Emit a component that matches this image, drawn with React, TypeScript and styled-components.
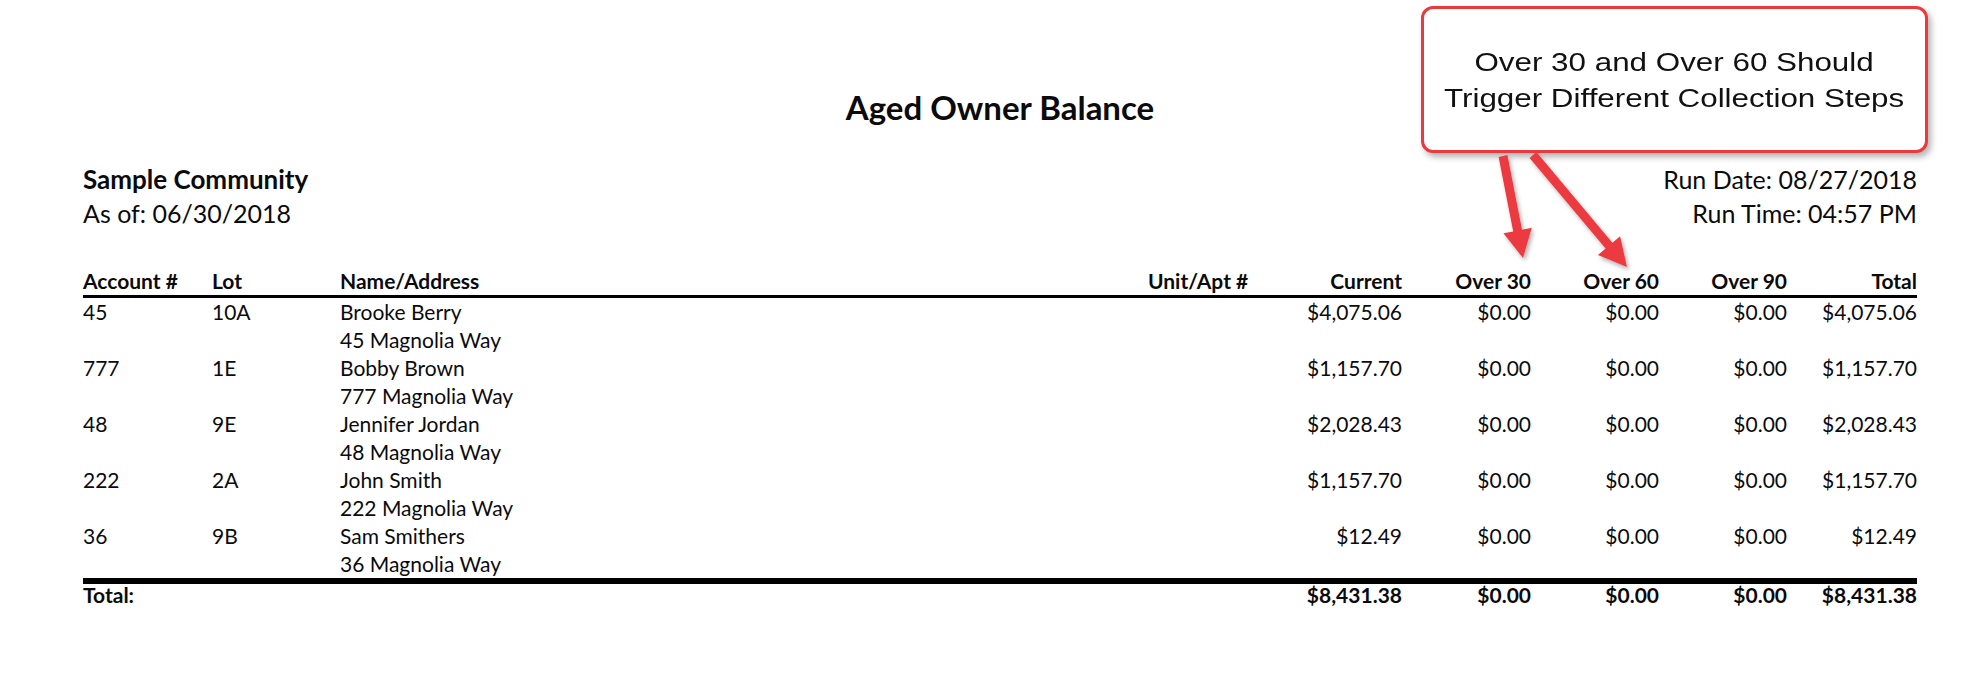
import React from "react";
import styled, { createGlobalStyle } from "styled-components";

const GlobalStyle = createGlobalStyle`
  html, body {
    margin: 0;
    padding: 0;
    background: #ffffff;
  }
  * { box-sizing: border-box; }
`;

const COLS = "129px 128px 808px 127px 127px 129px 128px 128px 130px";

const Page = styled.div`
  position: relative;
  width: 1985px;
  height: 700px;
  padding: 91px 68px 0 83px;
  font-family: "Lato", "Open Sans", sans-serif;
  font-size: 21px;
  color: #0b0b0e;
  background: #fff;
  overflow: hidden;
`;

const Title = styled.h1`
  margin: 0;
  text-align: center;
  font-size: 33px;
  line-height: 32px;
  font-weight: 700;
`;

const InfoRow = styled.div`
  display: flex;
  justify-content: space-between;
  margin-top: 39px;
  font-size: 25px;
  line-height: 34px;
`;

const InfoBlock = styled.div<{ $right?: boolean }>`
  display: flex;
  flex-direction: column;
  align-items: ${(p) => (p.$right ? "flex-end" : "flex-start")};
`;

const Community = styled.div`
  font-weight: 700;
  font-size: 26px;
`;

const GridRow = styled.div`
  display: grid;
  grid-template-columns: ${COLS};
`;

const HeaderRow = styled(GridRow)`
  margin-top: 37px;
  font-weight: 700;
  line-height: 28px;
  border-bottom: 3px solid #000;
`;

const Record = styled(GridRow)`
  line-height: 28px;
`;

const TotalRow = styled(GridRow)`
  font-weight: 700;
  line-height: 22px;
  border-top: 6px solid #000;
`;

const Cell = styled.div<{ $right?: boolean }>`
  text-align: ${(p) => (p.$right ? "right" : "left")};
  white-space: nowrap;
`;

const Callout = styled.div`
  position: absolute;
  left: 1421px;
  top: 6px;
  width: 507px;
  height: 147px;
  border: 3px solid #ea3a3e;
  border-radius: 12px;
  background: #fff;
  box-shadow: 3px 4px 6px rgba(0, 0, 0, 0.3);
  display: flex;
  align-items: center;
  justify-content: center;
`;

const CalloutText = styled.div`
  font-family: "Liberation Sans", Arial, sans-serif;
  font-size: 25.5px;
  line-height: 36px;
  color: #111111;
  text-align: center;
  white-space: nowrap;
  transform: scaleX(1.23);
`;

const ArrowLayer = styled.svg`
  position: absolute;
  left: 1470px;
  top: 140px;
  overflow: visible;
`;

type Row = {
  acct: string;
  lot: string;
  name: string;
  addr: string;
  current: string;
  o30: string;
  o60: string;
  o90: string;
  total: string;
};

const rows: Row[] = [
  { acct: "45", lot: "10A", name: "Brooke Berry", addr: "45 Magnolia Way", current: "$4,075.06", o30: "$0.00", o60: "$0.00", o90: "$0.00", total: "$4,075.06" },
  { acct: "777", lot: "1E", name: "Bobby Brown", addr: "777 Magnolia Way", current: "$1,157.70", o30: "$0.00", o60: "$0.00", o90: "$0.00", total: "$1,157.70" },
  { acct: "48", lot: "9E", name: "Jennifer Jordan", addr: "48 Magnolia Way", current: "$2,028.43", o30: "$0.00", o60: "$0.00", o90: "$0.00", total: "$2,028.43" },
  { acct: "222", lot: "2A", name: "John Smith", addr: "222 Magnolia Way", current: "$1,157.70", o30: "$0.00", o60: "$0.00", o90: "$0.00", total: "$1,157.70" },
  { acct: "36", lot: "9B", name: "Sam Smithers", addr: "36 Magnolia Way", current: "$12.49", o30: "$0.00", o60: "$0.00", o90: "$0.00", total: "$12.49" },
];

function arrowPoints(
  tx: number, ty: number, hx: number, hy: number,
  shaft = 9, headW = 29, headL = 28
): string {
  const dx = hx - tx;
  const dy = hy - ty;
  const len = Math.hypot(dx, dy);
  const ux = dx / len;
  const uy = dy / len;
  const px = -uy;
  const py = ux;
  const bx = hx - ux * headL;
  const by = hy - uy * headL;
  const s = shaft / 2;
  const h = headW / 2;
  const pts: [number, number][] = [
    [tx + px * s, ty + py * s],
    [bx + px * s, by + py * s],
    [bx + px * h, by + py * h],
    [hx, hy],
    [bx - px * h, by - py * h],
    [bx - px * s, by - py * s],
    [tx - px * s, ty - py * s],
  ];
  return pts.map(([x, y]) => `${x.toFixed(1)},${y.toFixed(1)}`).join(" ");
}

const Arrows: React.FC = () => {
  // coordinates relative to layer origin (1470, 140)
  const a1 = arrowPoints(1503 - 1470, 156 - 140, 1523 - 1470, 258 - 140);
  const a2 = arrowPoints(1533 - 1470, 155 - 140, 1627 - 1470, 267 - 140);
  return (
    <ArrowLayer width={180} height={140} viewBox="0 0 180 140">
      <defs>
        <filter id="arrowShadow" x="-20%" y="-20%" width="140%" height="140%">
          <feDropShadow dx="2" dy="3" stdDeviation="2" floodColor="#000" floodOpacity="0.3" />
        </filter>
      </defs>
      <g fill="#ec3b3f" filter="url(#arrowShadow)">
        <polygon points={a1} />
        <polygon points={a2} />
      </g>
    </ArrowLayer>
  );
};

export default function App() {
  return (
    <>
      <GlobalStyle />
      <Page>
        <Title>Aged Owner Balance</Title>
        <InfoRow>
          <InfoBlock>
            <Community>Sample Community</Community>
            <div>As of: 06/30/2018</div>
          </InfoBlock>
          <InfoBlock $right>
            <div>Run Date: 08/27/2018</div>
            <div>Run Time: 04:57 PM</div>
          </InfoBlock>
        </InfoRow>

        <HeaderRow>
          <Cell>Account #</Cell>
          <Cell>Lot</Cell>
          <Cell>Name/Address</Cell>
          <Cell>Unit/Apt #</Cell>
          <Cell $right>Current</Cell>
          <Cell $right>Over 30</Cell>
          <Cell $right>Over 60</Cell>
          <Cell $right>Over 90</Cell>
          <Cell $right>Total</Cell>
        </HeaderRow>

        {rows.map((r) => (
          <Record key={r.acct}>
            <Cell>{r.acct}</Cell>
            <Cell>{r.lot}</Cell>
            <Cell>
              <div>{r.name}</div>
              <div>{r.addr}</div>
            </Cell>
            <Cell />
            <Cell $right>{r.current}</Cell>
            <Cell $right>{r.o30}</Cell>
            <Cell $right>{r.o60}</Cell>
            <Cell $right>{r.o90}</Cell>
            <Cell $right>{r.total}</Cell>
          </Record>
        ))}

        <TotalRow>
          <Cell>Total:</Cell>
          <Cell />
          <Cell />
          <Cell />
          <Cell $right>$8,431.38</Cell>
          <Cell $right>$0.00</Cell>
          <Cell $right>$0.00</Cell>
          <Cell $right>$0.00</Cell>
          <Cell $right>$8,431.38</Cell>
        </TotalRow>

        <Callout>
          <CalloutText>
            <div>Over 30 and Over 60 Should</div>
            <div>Trigger Different Collection Steps</div>
          </CalloutText>
        </Callout>
        <Arrows />
      </Page>
    </>
  );
}
